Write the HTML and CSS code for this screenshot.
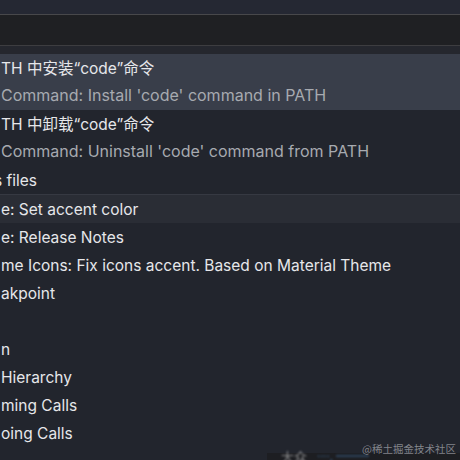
FILE: index.html
```html
<!DOCTYPE html>
<html>
<head>
<meta charset="utf-8">
<link rel="stylesheet" href="styles.css">
</head>
<body>
<div class="window">
  <div class="titlebar"></div>
  <div class="inputbox"></div>
  <div class="gap"></div>
  <ul class="list">
    <li class="item two selected">
      <div class="label">TH 中安装“code”命令</div>
      <div class="detail">Command: Install 'code' command in PATH</div>
    </li>
    <li class="item two">
      <div class="label">TH 中卸载“code”命令</div>
      <div class="detail">Command: Uninstall 'code' command from PATH</div>
    </li>
    <li class="item"><span class="label"><span class="cut">s</span> files</span></li>
    <li class="item hover sep"><span class="label">e: Set accent color</span></li>
    <li class="item"><span class="label">e: Release Notes</span></li>
    <li class="item"><span class="label">me Icons: Fix icons accent. Based on Material Theme</span></li>
    <li class="item"><span class="label">akpoint</span></li>
    <li class="item"><span class="label"></span></li>
    <li class="item"><span class="label">n</span></li>
    <li class="item"><span class="label">Hierarchy</span></li>
    <li class="item"><span class="label">ming Calls</span></li>
    <li class="item"><span class="label">oing Calls</span></li>
  </ul>
  <div class="statusbar">
    <span class="faint-white">大众</span>
    <span class="faint-blue">····, ═══</span>
  </div>
  <div class="watermark">@稀土掘金技术社区</div>
</div>
</body>
</html>
```

FILE: styles.css
```css
* { box-sizing: border-box; }
html, body {
  margin: 0;
  padding: 0;
  width: 460px;
  height: 460px;
  overflow: hidden;
  background: #22252d;
}
.window {
  position: relative;
  width: 460px;
  height: 460px;
  display: flex;
  flex-direction: column;
  font-family: Inter, "Noto Sans CJK SC", sans-serif;
  color: #e6e7ea;
  overflow: hidden;
}
.titlebar {
  height: 15px;
  background: #252833;
  border-bottom: 1px solid #48484b;
  flex: none;
}
.inputbox {
  height: 31px;
  background: #1f2023;
  border-bottom: 1px solid #3d3d40;
  flex: none;
}
.gap {
  height: 8px;
  background: #25272e;
  flex: none;
}
.list {
  list-style: none;
  margin: 0;
  padding: 0;
  flex: none;
}
.item {
  height: 28px;
  display: flex;
  align-items: center;
  font-size: 15.5px;
  white-space: nowrap;
  padding-left: 1px;
}
.item.two {
  height: 56px;
  flex-direction: column;
  align-items: flex-start;
  justify-content: flex-start;
  padding-top: 4px;
}
.item.two .label { line-height: 22px; }
.item.two .detail {
  line-height: 26px;
  margin-top: 2px;
  font-size: 16px;
  color: #a7aab0;
}
.item.selected { background: #393e4a; }
.item.hover { background: #2a2d35; }
.item.sep { border-top: 1px solid #363942; height: 29px; }
.cut { margin-left: -7px; }
.statusbar {
  position: absolute;
  left: 267px;
  right: 0;
  bottom: 0;
  height: 7px;
  background: #1d1e22;
  font-size: 13px;
  white-space: nowrap;
}
.faint-white {
  position: absolute;
  left: 14px;
  top: -6px;
  color: rgba(230, 230, 230, 0.55);
  filter: blur(0.8px);
}
.faint-blue {
  position: absolute;
  left: 50px;
  top: -6px;
  font-size: 11px;
  color: rgba(80, 150, 220, 0.6);
  filter: blur(0.8px);
}
.watermark {
  position: absolute;
  right: 4px;
  bottom: 4px;
  font-size: 10.5px;
  line-height: 14px;
  color: rgba(150, 152, 158, 0.85);
  font-family: "Noto Sans CJK SC", sans-serif;
}
```
